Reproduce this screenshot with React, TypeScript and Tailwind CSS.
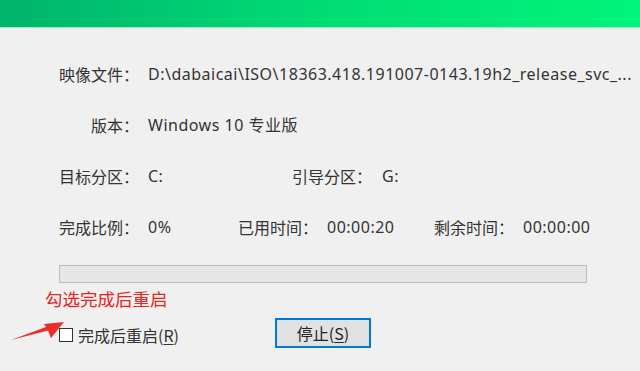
import type { ReactNode } from 'react'

const cjk = "font-['Noto_Sans_CJK_SC',sans-serif]"
const latin = "font-['Noto_Sans','Noto_Sans_CJK_SC',sans-serif] tracking-[0.5px]"

function Field({ label, value, width }: { label: string; value: ReactNode; width?: string }) {
  return (
    <div className="flex items-center">
      <span className={`w-[80px] text-right whitespace-nowrap ${cjk}`}>{label}</span>
      <span className={`ml-[9px] whitespace-nowrap ${latin} ${width ?? ''}`}>{value}</span>
    </div>
  )
}

export default function App() {
  return (
    <div className="w-[640px] h-[371px] overflow-hidden bg-[#f0f0f0] text-[16px] leading-[22px] text-[#333333] relative">
      {/* title bar strip */}
      <div className="h-[28px] bg-gradient-to-r from-[#00b46c] via-[#00dc74] to-[#00f47c] border-b border-[#9fe9c2]" />

      <div className="pt-[20px] pl-[59px]">
        <div className="h-[51px] flex items-center">
          <Field label="映像文件：" value="D:\dabaicai\ISO\18363.418.191007-0143.19h2_release_svc_..." />
        </div>
        <div className="h-[51px] flex items-center">
          <Field label="版本：" value="Windows 10 专业版" />
        </div>
        <div className="h-[51px] flex items-center">
          <Field label="目标分区：" value="C:" width="w-[144px]" />
          <span className={`w-[80px] whitespace-nowrap ${cjk}`}>引导分区：</span>
          <span className={`ml-[10px] ${latin}`}>G:</span>
        </div>
        <div className="h-[51px] flex items-center">
          <Field label="完成比例：" value="0%" width="w-[90px]" />
          <span className={`w-[80px] whitespace-nowrap ${cjk}`}>已用时间：</span>
          <span className={`ml-[9px] w-[107px] ${latin}`}>00:00:20</span>
          <span className={`w-[80px] whitespace-nowrap ${cjk}`}>剩余时间：</span>
          <span className={`ml-[9px] ${latin}`}>00:00:00</span>
        </div>

        {/* progress */}
        <div className="mt-[13px] w-[528px] h-[18px] border border-[#bcbcbc] bg-[#e6e6e6]" />

        <div className={`mt-[6px] -ml-[14px] h-[20px] leading-[20px] text-[17.5px] text-[#e62423] ${cjk}`}>勾选完成后重启</div>

        <div className="mt-[9px] h-[30px] flex items-center">
          <div className="flex items-center w-[216px] pt-[3px]">
            <span className="w-[14px] h-[14px] border border-[#333333] bg-white" />
            <span className={`ml-[5px] text-[16px] ${cjk}`}>
              完成后重启(<span className="underline underline-offset-2">R</span>)
            </span>
          </div>
          <button className={`w-[96px] h-[30px] border-2 border-[#0078d7] bg-[#e1e1e1] text-[16px] text-[#222] ${cjk}`}>
            停止(<span className="underline underline-offset-2">S</span>)
          </button>
        </div>
      </div>

      {/* red annotation arrow */}
      <svg className="absolute left-0 top-[310px]" width="80" height="40" viewBox="0 310 80 40">
        <polygon points="11,340 46,327 44,324 64,322 51,338 48,330.5" fill="#ec2b2b" />
      </svg>
    </div>
  )
}
